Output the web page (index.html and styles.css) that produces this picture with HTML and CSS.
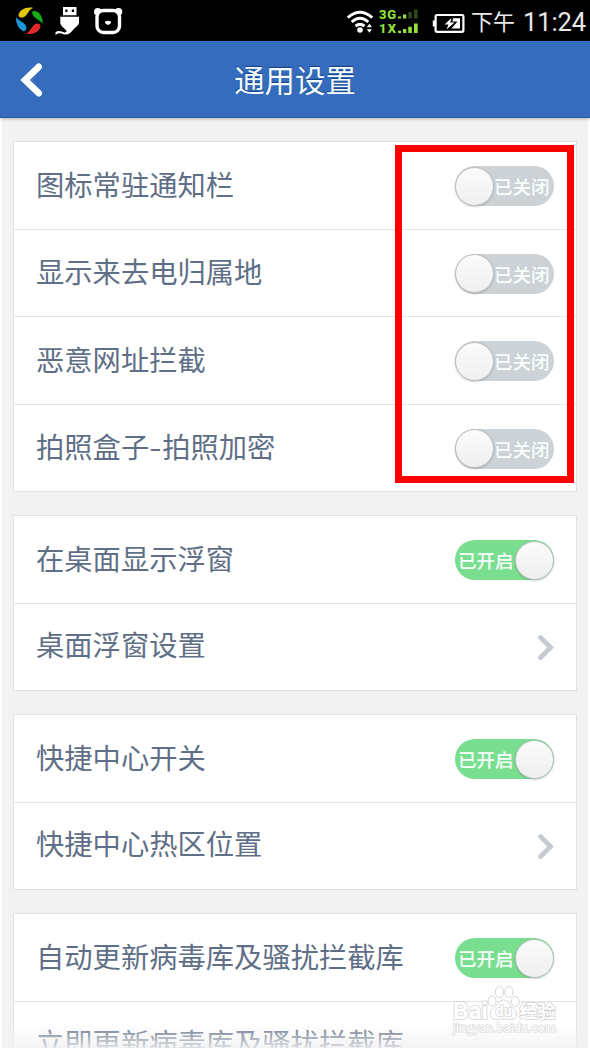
FILE: index.html
```html
<!DOCTYPE html>
<html lang="zh-CN">
<head>
<meta charset="utf-8">
<title>通用设置</title>
<link rel="stylesheet" href="styles.css">
</head>
<body>
<div class="phone">
  <div class="status">
    <svg class="status-left" width="130" height="41" viewBox="0 0 130 41">
      <path fill="#e3c60b" d="M18.500 15C20 9.500 26 6.500 33.500 8C29 9 28.500 13 25.500 16C22.500 18.500 18.500 18 18.500 15Z"/>
      <path fill="#16ad16" d="M33 11C38.500 10 43.500 16.500 42.500 24C41 21 37.500 20 34.500 17C32 14.500 31.500 12 33 11Z"/>
      <path fill="#dd2929" d="M25.500 33.500C29 33 30.500 28.500 34 25C37 22.500 41 23.500 40.500 27C38.500 32.500 32 35.500 25.500 33.500Z"/>
      <path fill="#1996d8" d="M16.300 17C18.500 21 22.500 21 25 24.500C27.500 28 26.500 31 23.500 31.200C18.500 29 15.300 23 16.300 17Z"/>
      <path fill="#fff" fill-rule="evenodd" d="M63 7h13.500v8.300H63zM65.300 9.600v2.300h2.200V9.600zM71.800 9.600v2.300H74V9.600z"/>
      <path fill="#fff" d="M60.300 16.700H79V23C79 25 74 28.500 72.500 30.500C70 33.500 67 35.500 63.500 34.200C61 33.300 58.500 32.500 55.500 35V32.200C58.500 29.800 62 32 64.500 32.500C66 32.600 67.300 31.500 66 30.200C64 28 60.300 25.500 60.300 23Z"/>
      <circle cx="97.800" cy="11.800" r="3.800" fill="#fff"/><circle cx="118.500" cy="11.800" r="3.800" fill="#fff"/>
      <rect x="97" y="10.500" width="22.500" height="22" rx="6.500" fill="#000" stroke="#fff" stroke-width="3.400"/>
      <path fill="#fff" d="M105 21.500q3-1.500 6 0q.500 2-3 3.500q-3.500-1.500-3-3.500z"/>
    </svg>
    <svg class="status-right" width="120" height="41" viewBox="346 0 120 41">
      <g fill="none" stroke="#fff" stroke-width="2.900">
        <path d="M347.800 17.600Q360 6.900 372.200 17.600"/>
        <path d="M351.700 22Q360 14.700 368.300 22"/>
        <path d="M355.500 26.200Q360 22.400 364.500 26.200"/>
      </g>
      <circle cx="360" cy="30" r="2.800" fill="#fff"/>
      <path fill="#fff" d="M366.800 27.300l2.600-3.500l2.600 3.500zM366.800 29.300h5.200l-2.600 3.500z"/>
      <text class="net" x="379" y="18.700" textLength="17">3G</text>
      <text class="net" x="379" y="32.900" textLength="17">1X</text>
      <path fill="#91e23c" d="M398 16.500h3V18.500h-3zM403 14.500h3.300V18.500H403zM398 30.800h3V33h-3zM403 29h3.300v4H403zM408.300 26.800h3.500V33h-3.500zM414 23.500h3.700V33H414z"/>
      <path fill="#2b481b" d="M408.300 12h3.500v6.500h-3.500zM414 9.500h3.700V18.500H414z"/>
      <rect x="435.600" y="15" width="27.800" height="16.800" rx="1.500" fill="none" stroke="#fff" stroke-width="2.200"/>
      <path fill="#fff" d="M432.800 20.500h2.700v6h-2.700zM453 18.200h7V28.600h-8.500l6-7.100h-5zM451.500 18l-7 6.500h4l-2 5l8-7h-4.300z"/>
    </svg>
    <span class="ampm">下午</span><span class="clock">11:24</span>
  </div>
  <header class="header">
    <svg class="back" width="22" height="36" viewBox="0 0 22 36"><path d="M18.700 4.800L5 18L18.700 31.200"/></svg>
    <h1 class="title">通用设置</h1>
  </header>
  <div class="screen">
    <main class="list">
      <section class="card">
        <div class="row"><span class="label">图标常驻通知栏</span><span class="switch off"><span class="knob"></span><span class="state">已关闭</span></span></div>
        <div class="row"><span class="label">显示来去电归属地</span><span class="switch off"><span class="knob"></span><span class="state">已关闭</span></span></div>
        <div class="row"><span class="label">恶意网址拦截</span><span class="switch off"><span class="knob"></span><span class="state">已关闭</span></span></div>
        <div class="row"><span class="label">拍照盒子<span class="dash">-</span>拍照加密</span><span class="switch off"><span class="knob"></span><span class="state">已关闭</span></span></div>
      </section>
      <section class="card">
        <div class="row"><span class="label">在桌面显示浮窗</span><span class="switch on"><span class="state">已开启</span><span class="knob"></span></span></div>
        <div class="row link"><span class="label">桌面浮窗设置</span><svg class="chevron" width="18" height="28" viewBox="0 0 18 28"><path d="M3.500 3.500L13.600 13.500L3.500 23.500"/></svg></div>
      </section>
      <section class="card">
        <div class="row"><span class="label">快捷中心开关</span><span class="switch on"><span class="state">已开启</span><span class="knob"></span></span></div>
        <div class="row link"><span class="label">快捷中心热区位置</span><svg class="chevron" width="18" height="28" viewBox="0 0 18 28"><path d="M3.500 3.500L13.600 13.500L3.500 23.500"/></svg></div>
      </section>
      <section class="card">
        <div class="row"><span class="label">自动更新病毒库及骚扰拦截库</span><span class="switch on"><span class="state">已开启</span><span class="knob"></span></span></div>
        <div class="row link"><span class="label">立即更新病毒库及骚扰拦截库</span></div>
      </section>
    </main>
    <div class="fade"></div>
  </div>
  <div class="highlight"></div>
  <svg class="watermark" width="112" height="54" viewBox="0 0 112 54">
    <g class="mark">
      <text class="brand" x="2" y="36.500" textLength="35" lengthAdjust="spacingAndGlyphs">Bai</text>
      <ellipse cx="41" cy="19" rx="4" ry="5"/>
      <ellipse cx="48.500" cy="10" rx="4.200" ry="5.500"/>
      <ellipse cx="57.800" cy="10" rx="4.200" ry="5.500"/>
      <ellipse cx="64.300" cy="19.500" rx="4" ry="5"/>
      <path d="M52.500 18C48 18 46.500 23 42.500 26C37 30 38.500 37.500 45 37.500C48 37.500 50 37 53 37C56 37 57 37.500 60 37.500C66.500 37.500 67.500 30 62 26C58.500 23 57 18 52.500 18Z"/>
      <text class="du" x="44.500" y="34" textLength="16">du</text>
      <text class="cn" x="68.500" y="36" textLength="36">经验</text>
      <text class="url" x="2" y="50" textLength="103">jingyan.baidu.com</text>
    </g>
  </svg>
</div>
</body>
</html>
```
FILE: styles.css
```css
* { box-sizing: border-box; }
body { margin: 0; background: #fff; font-family: Roboto, "Noto Sans CJK SC", sans-serif; }
.phone { position: relative; width: 590px; height: 1050px; overflow: hidden; }
.status { display: flex; height: 41px; background: #000; color: #e9e9e9; white-space: nowrap; }
.status-left { flex: none; }
.status-right { flex: none; margin-left: 216px; }
.net { fill: #91e23c; font: 800 13px Roboto, sans-serif; }
.ampm { margin-left: 5px; font: 400 22px/41px "Noto Sans CJK SC", sans-serif; }
.clock { margin-left: 8px; font: 400 25.5px/44px Roboto, sans-serif; letter-spacing: -0.1px; }
.header { display: flex; align-items: center; justify-content: center; position: relative; z-index: 1; height: 77px; background: #356cbd; border-top: 1px solid #2e7bd0; border-bottom: 1px solid #2c58a0; box-shadow: 0 1px 3px rgba(0, 0, 0, .25); }
.back { position: absolute; left: 20px; top: 20px; }
.back path { fill: none; stroke: #fff; stroke-width: 6.6; stroke-linecap: round; stroke-linejoin: miter; }
.title { margin: 0 0 2px; color: #f2fbff; font: 400 30.4px/72px "Noto Sans CJK SC", sans-serif; text-shadow: 0 -1px 1px rgba(10, 40, 90, .65); }
.screen { position: relative; height: 930px; margin: 0 2px; background: #f2f2f2; overflow: hidden; }
.list { display: flex; flex-direction: column; gap: 23px; padding: 23px 11px 0; }
.card { background: #fff; border: 1px solid #e1e1e1; }
.row { display: flex; align-items: center; justify-content: space-between; height: 87.5px; padding: 0 22px; border-bottom: 1px solid #e5e5e5; }
.row:last-child { height: 86.5px; border-bottom: 0; }
.label { padding-bottom: 3px; color: #5f6f87; font: 400 28.3px/40px "Noto Sans CJK SC", sans-serif; white-space: nowrap; }
.link .label { padding-bottom: 5px; }
.dash { display: inline-block; width: 13px; text-align: center; transform: scaleX(1.25); }
.switch { display: flex; align-items: center; width: 99px; height: 40px; border-radius: 20px; margin-top: 2px; }
.off { background: #ccd2d5; }
.on { background: #7ade90; }
.knob { flex: none; width: 39px; height: 39px; border: 1px solid #b9bdc0; border-radius: 50%; background: linear-gradient(#fbfbfb, #efefef); box-shadow: 0 1px 2px rgba(0, 0, 0, .2); }
.state { color: #f8fffb; font: 500 18.5px/38px "Noto Sans CJK SC", sans-serif; white-space: nowrap; }
.on .state { width: 57px; margin-left: 3px; }
.chevron { margin-right: -1px; margin-top: 3px; }
.chevron path { fill: none; stroke: #c6cad1; stroke-width: 4.8; stroke-linecap: round; }
.fade { position: absolute; left: 0; right: 0; bottom: 0; height: 25px; background: linear-gradient(rgba(242, 242, 242, 0), rgba(242, 242, 242, .85)); }
.highlight { position: absolute; left: 395px; top: 145px; width: 179px; height: 338px; border: 7px solid #fd0000; }
.watermark { position: absolute; left: 451px; top: 982px; overflow: visible; }
.mark { fill: #fff; stroke: #d6d6d6; stroke-width: 1; }
.mark text { stroke-width: 1.6; paint-order: stroke; }
.mark .url { stroke-width: 1.2; }
.brand { font: 700 23px Roboto, sans-serif; }
.du { font: 700 14px Roboto, sans-serif; }
.cn { font: 700 18px "Noto Sans CJK SC", sans-serif; }
.url { font: 400 12.5px Roboto, sans-serif; }
```
